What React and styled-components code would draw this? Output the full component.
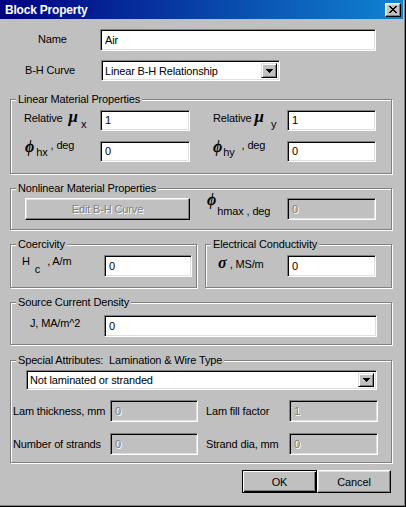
import React from 'react';
import styled, { createGlobalStyle } from 'styled-components';

const Global = createGlobalStyle`
  html, body { margin: 0; padding: 0; background: #c0c0c0; }
  * { box-sizing: border-box; }
`;

const Window = styled.div`
  width: 406px;
  height: 507px;
  background: #c0c0c0;
  box-shadow: inset -1px -1px 0 #000, inset -2px -2px 0 #808080;
  display: flex;
  flex-direction: column;
  font-family: "Liberation Sans", Arial, sans-serif;
  font-size: 11px;
  letter-spacing: -0.15px;
  color: #000;
  overflow: hidden;
`;

const TitleBar = styled.div`
  width: 403px;
  height: 19px;
  flex: none;
  background: linear-gradient(to right, #000080, #1084d0);
  display: flex;
  align-items: center;
  justify-content: space-between;
  padding: 0 2px 0 5px;
`;

const TitleText = styled.span`
  color: #fff;
  font-weight: bold;
  font-size: 12px;
  letter-spacing: -0.2px;
`;

const CloseButton = styled.button`
  width: 16px;
  height: 14px;
  padding: 0;
  margin: 0;
  background: #c0c0c0;
  border: 1px solid;
  border-color: #fff #000 #000 #fff;
  box-shadow: inset -1px -1px 0 #808080, inset 1px 1px 0 #dfdfdf;
  display: flex;
  align-items: center;
  justify-content: center;
`;

const Client = styled.div`
  display: flex;
  flex-direction: column;
  padding-top: 10px;
`;

const TopRow = styled.div`
  display: flex;
  align-items: flex-start;
  height: ${p => p.$h}px;
  margin-top: ${p => p.$mt || 0}px;
`;

const FieldLabel = styled.div`
  width: ${p => (p.$w ? `${p.$w}px` : 'auto')};
  padding-left: ${p => p.$pl || 0}px;
  padding-top: ${p => (p.$pt ?? 2)}px;
  line-height: 13px;
  white-space: nowrap;
  flex: none;
`;

const Greek = styled.span`
  font-family: "Liberation Serif", "DejaVu Serif", serif;
  font-weight: bold;
  font-style: italic;
  font-size: ${p => p.$size || 15}px;
  margin-left: ${p => p.$ml || 0}px;
  vertical-align: ${p => p.$va || 0}px;
  line-height: 0;
  letter-spacing: 0;
`;

const Shift = styled.span`
  margin-left: ${p => p.$ml || 0}px;
  vertical-align: ${p => p.$va || 0}px;
  line-height: 0;
`;

const TextInput = styled.input`
  width: ${p => p.$w}px;
  height: ${p => p.$h || 22}px;
  margin: 0;
  padding: 0 0 1px 4px;
  font: inherit;
  letter-spacing: inherit;
  color: #000;
  background: #fff;
  border: 1px solid;
  border-color: #808080 #fff #fff #808080;
  box-shadow: inset 1px 1px 0 #000, inset -1px -1px 0 #dfdfdf;
  outline: none;
  border-radius: 0;
  &:disabled {
    background: #c0c0c0;
    color: #808080;
    -webkit-text-fill-color: #808080;
    text-shadow: 1px 1px 0 #fff;
    opacity: 1;
  }
`;

const SelectBox = styled.div`
  width: ${p => p.$w}px;
  height: ${p => p.$h}px;
  margin-left: ${p => p.$ml || 0}px;
  background: #fff;
  border: 1px solid;
  border-color: #808080 #fff #fff #808080;
  box-shadow: inset 1px 1px 0 #000, inset -1px -1px 0 #dfdfdf;
  padding: 2px;
  display: flex;
  align-items: stretch;
  flex: none;
`;

const SelectText = styled.span`
  flex: 1;
  padding-left: 1px;
  display: flex;
  align-items: center;
  white-space: nowrap;
  overflow: hidden;
`;

const DropButton = styled.span`
  width: 16px;
  flex: none;
  background: #c0c0c0;
  border: 1px solid;
  border-color: #dfdfdf #000 #000 #dfdfdf;
  box-shadow: inset 1px 1px 0 #fff, inset -1px -1px 0 #808080;
  display: flex;
  align-items: center;
  justify-content: center;
`;

const Group = styled.fieldset`
  margin: ${p => p.$mt || 0}px 0 0 ${p => p.$ml ?? 10}px;
  width: ${p => p.$w || 382}px;
  min-width: 0;
  padding: 0 0 ${p => p.$pb || 0}px 0;
  border: 1px solid #808080;
  box-shadow: inset 1px 1px 0 #fff, 1px 1px 0 #fff;
  flex: none;
`;

const Legend = styled.legend`
  margin-left: 5px;
  padding: 0 2px;
  line-height: 13px;
  background: #c0c0c0;
  white-space: nowrap;
`;

const FormGrid = styled.div`
  display: grid;
  grid-template-columns: ${p => p.$cols};
  grid-auto-rows: ${p => p.$rh || 22}px;
  row-gap: ${p => p.$gap || 0}px;
  margin-top: ${p => p.$mt || 0}px;
  margin-left: ${p => p.$ml || 0}px;
  align-items: start;
`;

const GroupRow = styled.div`
  display: flex;
  gap: 8px;
  margin: ${p => p.$mt || 0}px 0 0 10px;
`;

const PushButton = styled.button`
  width: ${p => p.$w}px;
  height: ${p => p.$h || 23}px;
  margin: 0;
  padding: 0;
  font: inherit;
  letter-spacing: inherit;
  color: #000;
  background: #c0c0c0;
  border: 1px solid;
  border-color: #fff #000 #000 #fff;
  box-shadow: inset -1px -1px 0 #808080, inset 1px 1px 0 #dfdfdf;
  border-radius: 0;
  &:disabled {
    color: #808080;
    text-shadow: 1px 1px 0 #fff;
  }
`;

const DefaultButton = styled(PushButton)`
  border-color: #000;
  box-shadow: inset 1px 1px 0 #fff, inset -1px -1px 0 #000, inset -2px -2px 0 #808080;
`;

const ButtonRow = styled.div`
  display: flex;
  justify-content: flex-end;
  margin-top: 7px;
  padding-right: 15px;
`;

const closePixels = [
  [0, 0], [6, 0], [1, 1], [5, 1], [2, 2], [4, 2], [3, 3], [2, 4], [4, 4], [1, 5], [5, 5], [0, 6], [6, 6],
];

const CloseGlyph = () => (
  <svg width="8" height="7" viewBox="0 0 8 7" shapeRendering="crispEdges">
    <path d={closePixels.map(([x, y]) => `M${x} ${y}h2v1h-2z`).join('')} fill="#000" />
  </svg>
);

const DownArrow = () => (
  <svg width="7" height="4" viewBox="0 0 7 4" shapeRendering="crispEdges">
    <path d="M0 0h7v1h-1v1h-1v1h-1v1h-1v-1h-1v-1h-1v-1h-1z" fill="#000" />
  </svg>
);

const Select = ({ w, h, ml, value }) => (
  <SelectBox $w={w} $h={h} $ml={ml}>
    <SelectText>{value}</SelectText>
    <DropButton>
      <DownArrow />
    </DropButton>
  </SelectBox>
);

export default function App() {
  return (
    <>
      <Global />
      <Window>
        <TitleBar>
          <TitleText>Block Property</TitleText>
          <CloseButton aria-label="Close">
            <CloseGlyph />
          </CloseButton>
        </TitleBar>

        <Client>
          <TopRow $h={22}>
            <FieldLabel $w={100} $pl={38} $pt={4}>Name</FieldLabel>
            <TextInput $w={276} $h={22} defaultValue="Air" />
          </TopRow>

          <TopRow $h={21} $mt={9}>
            <FieldLabel $w={101} $pl={25} $pt={4}>B-H Curve</FieldLabel>
            <Select w={179} h={21} value="Linear B-H Relationship" />
          </TopRow>

          <Group $mt={12} $pb={11}>
            <Legend>Linear Material Properties</Legend>
            <FormGrid $cols="89px 90px 97px 89px" $rh={21} $gap={10} $mt={4}>
              <FieldLabel $pl={13}>
                Relative<Greek $size={17} $ml={6}>μ</Greek>
                <Shift $ml={3} $va={-6}>x</Shift>
              </FieldLabel>
              <TextInput $w={90} $h={21} defaultValue="1" />
              <FieldLabel $pl={23}>
                Relative<Greek $size={17} $ml={3}>μ</Greek>
                <Shift $ml={7} $va={-6}>y</Shift>
              </FieldLabel>
              <TextInput $w={89} $h={21} defaultValue="1" />

              <FieldLabel $pl={14}>
                <Greek $size={16} $va={1}>ϕ</Greek>
                <Shift $ml={2} $va={-3}>hx</Shift>
                <Shift $ml={3} $va={4}>, deg</Shift>
              </FieldLabel>
              <TextInput $w={90} $h={21} defaultValue="0" />
              <FieldLabel $pl={23}>
                <Greek $size={16} $va={1}>ϕ</Greek>
                <Shift $ml={1} $va={-3}>hy</Shift>
                <Shift $ml={7} $va={4}>, deg</Shift>
              </FieldLabel>
              <TextInput $w={89} $h={21} defaultValue="0" />
            </FormGrid>
          </Group>

          <Group $mt={8} $pb={9}>
            <Legend>Nonlinear Material Properties</Legend>
            <FormGrid $cols="165px 97px 89px" $rh={22} $mt={3} $ml={14}>
              <PushButton $w={165} $h={22} disabled>Edit B-H Curve</PushButton>
              <FieldLabel $pl={17} $pt={0}>
                <Greek $size={16} $va={3}>ϕ</Greek>
                <Shift $ml={1} $va={-7}>hmax</Shift>
                <Shift $ml={3} $va={-7}>, deg</Shift>
              </FieldLabel>
              <TextInput $w={89} $h={22} defaultValue="0" disabled />
            </FormGrid>
          </Group>

          <GroupRow $mt={8}>
            <Group $ml={0} $w={187} $pb={10}>
              <Legend>Coercivity</Legend>
              <FormGrid $cols="93px 88px" $rh={22} $mt={4}>
                <FieldLabel $pl={11} $pt={0}>
                  H<Shift $ml={5} $va={-8}>c</Shift>
                  <Shift $ml={7}>, A/m</Shift>
                </FieldLabel>
                <TextInput $w={88} $h={22} defaultValue="0" />
              </FormGrid>
            </Group>
            <Group $ml={0} $w={187} $pb={10}>
              <Legend>Electrical Conductivity</Legend>
              <FormGrid $cols="81px 89px" $rh={22} $mt={4}>
                <FieldLabel $pl={12} $pt={3}>
                  <Greek $size={16}>σ</Greek>
                  <Shift $ml={3}>, MS/m</Shift>
                </FieldLabel>
                <TextInput $w={89} $h={22} defaultValue="0" />
              </FormGrid>
            </Group>
          </GroupRow>

          <Group $mt={8} $pb={7}>
            <Legend>Source Current Density</Legend>
            <FormGrid $cols="93px 273px" $rh={22} $mt={6}>
              <FieldLabel $pl={19} $pt={2}>J, MA/m^2</FieldLabel>
              <TextInput $w={273} $h={22} defaultValue="0" />
            </FormGrid>
          </Group>

          <Group $mt={9} $pb={7}>
            <Legend>Special Attributes:&nbsp; Lamination &amp; Wire Type</Legend>
            <FormGrid $cols="351px" $rh={20} $mt={3} $ml={15}>
              <Select w={351} h={20} value="Not laminated or stranded" />
            </FormGrid>
            <FormGrid $cols="99px 88px 91px 89px" $rh={22} $gap={11} $mt={10}>
              <FieldLabel $pl={2} $pt={5}>Lam thickness, mm</FieldLabel>
              <TextInput $w={88} $h={22} defaultValue="0" disabled />
              <FieldLabel $pl={8} $pt={5}>Lam fill factor</FieldLabel>
              <TextInput $w={89} $h={22} defaultValue="1" disabled />

              <FieldLabel $pl={2} $pt={5}>Number of strands</FieldLabel>
              <TextInput $w={88} $h={22} defaultValue="0" disabled />
              <FieldLabel $pl={8} $pt={5}>Strand dia, mm</FieldLabel>
              <TextInput $w={89} $h={22} defaultValue="0" disabled />
            </FormGrid>
          </Group>

          <ButtonRow>
            <DefaultButton $w={75} $h={23}>OK</DefaultButton>
            <PushButton $w={74} $h={23}>Cancel</PushButton>
          </ButtonRow>
        </Client>
      </Window>
    </>
  );
}
